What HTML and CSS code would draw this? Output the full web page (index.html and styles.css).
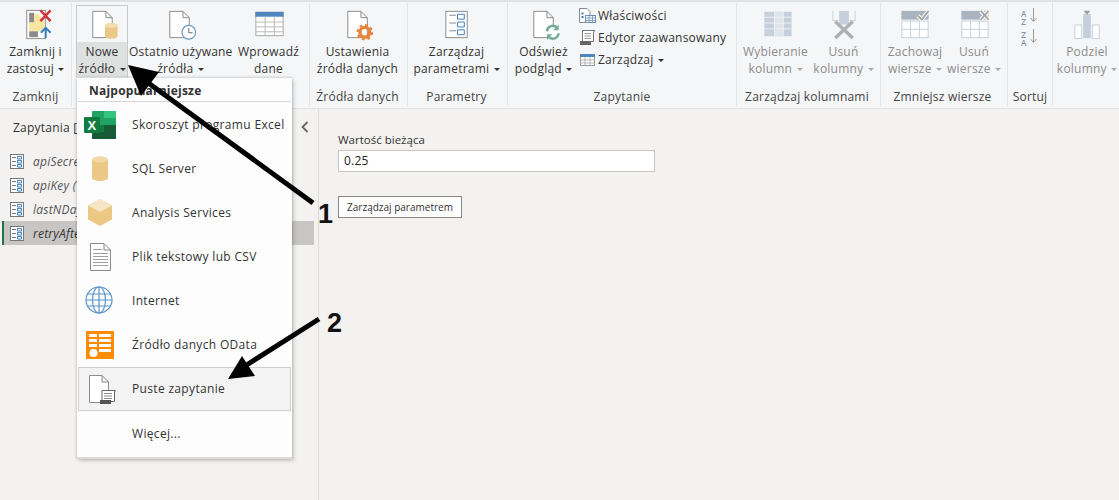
FILE: index.html
```html
<!DOCTYPE html>
<html lang="pl">
<head>
<meta charset="utf-8">
<title>Power Query</title>
<link rel="stylesheet" href="styles.css">
</head>
<body>
<svg class="defs" width="0" height="0">
  <defs>
    <path id="doc" d="M.5.5H14L20.500 7V27.500H.5Z M14 .5V7H20.500" fill="#fff" stroke="#8a8a8a"/>
  </defs>
</svg>
<div class="app">
  <header class="ribbon">
    <section class="group g-close">
      <div class="tools">
        <div class="tool w-full">
          <svg class="ico" viewBox="0 0 44 37"><rect x="12.500" y="4.500" width="19" height="29" fill="#fff" stroke="#8a8a8a"/><path d="M20 8H24L31 15V26H20Z" fill="#f8e6a0"/><rect x="15" y="7" width="5" height="10" fill="#8a8a8a"/><path d="M15 17H20V26H15Z" fill="#f8e6a0"/><rect x="15" y="26" width="9" height="6" fill="#8a8a8a"/><path d="M26.500 4.500L37 15.500M37 4.500L26.500 15.500" stroke="#d13438" stroke-width="2.500"/><path d="M32 33V23M27 27.500L32 22.500L37 27.500" stroke="#2f7fc1" stroke-width="2" fill="none"/></svg>
          <div class="lbl">Zamknij i<br>zastosuj <i class="caret"></i></div>
        </div>
      </div>
      <div class="glabel">Zamknij</div>
    </section>
    <section class="group g-new">
      <div class="tools">
        <div class="tool w-new active">
          <svg class="ico" viewBox="0 0 44 37"><use href="#doc" x="12" y="5"/><path d="M25 20a6.500 2.500 0 0 1 13 0V31a6.500 2.500 0 0 1-13 0Z" fill="#ebc884"/><ellipse cx="31.500" cy="20" rx="6.500" ry="2.500" fill="#f3dcae"/></svg>
          <div class="lbl">Nowe<br>źródło <i class="caret"></i></div>
        </div>
        <div class="tool w-recent">
          <svg class="ico" viewBox="0 0 44 37"><use href="#doc" x="10" y="5"/><circle cx="30" cy="27" r="7" fill="#fff" stroke="#6a9bc9" stroke-width="1.300"/><path d="M30 22.500V27.500H34" fill="none" stroke="#666"/></svg>
          <div class="lbl">Ostatnio używane<br>źródła <i class="caret"></i></div>
        </div>
        <div class="tool w-enter">
          <svg class="ico" viewBox="0 0 44 37"><rect x="8.500" y="6.500" width="28" height="24" fill="#fff" stroke="#a6a6a6"/><rect x="8" y="6" width="29" height="5" fill="#4f86bd"/><path d="M8.500 16.500H36.500M8.500 21.500H36.500M8.500 26.500H36.500M18 11V31M27.500 11V31" stroke="#b8b8b8"/></svg>
          <div class="lbl">Wprowadź<br>dane</div>
        </div>
      </div>
      <div class="glabel">&nbsp;</div>
    </section>
    <section class="group g-src">
      <div class="tools">
        <div class="tool w-full">
          <svg class="ico" viewBox="0 0 44 37"><use href="#doc" x="11" y="5"/><circle cx="29" cy="27" r="5" fill="none" stroke="#e8833a" stroke-width="3.500"/><circle cx="29" cy="27" r="7.500" fill="none" stroke="#e8833a" stroke-width="2" stroke-dasharray="3 2.900"/></svg>
          <div class="lbl">Ustawienia<br>źródła danych</div>
        </div>
      </div>
      <div class="glabel">Źródła danych</div>
    </section>
    <section class="group g-par">
      <div class="tools">
        <div class="tool w-full">
          <svg class="ico" viewBox="0 0 44 37"><rect x="10.500" y="5.500" width="22" height="27" fill="#fff" stroke="#8a8a8a"/><path d="M14 9.500H21M14 17.500H21M14 25.500H21" stroke="#8a8a8a"/><path d="M22.500 8.500H29.500V13.500H22.500ZM22.500 16.500H29.500V21.500H22.500ZM22.500 24.500H29.500V29.500H22.500Z" fill="none" stroke="#3f7fbf"/></svg>
          <div class="lbl">Zarządzaj<br>parametrami <i class="caret"></i></div>
        </div>
      </div>
      <div class="glabel">Parametry</div>
    </section>
    <section class="group g-query">
      <div class="tools">
        <div class="tool w-refresh">
          <svg class="ico" viewBox="0 0 44 37"><use href="#doc" x="11" y="5"/><circle cx="31" cy="27" r="7" fill="#fff"/><path d="M25 26a6 6 0 0 1 10.500-3.500M37 28a6 6 0 0 1-10.500 3.500" fill="none" stroke="#74ab98" stroke-width="2.500"/><path d="M37 19V25H31.500ZM25 35V29H30.500Z" fill="#74ab98"/></svg>
          <div class="lbl">Odśwież<br>podgląd <i class="caret"></i></div>
        </div>
        <div class="smalls">
          <div class="small">
            <svg class="sico" viewBox="0 0 17 17"><path d="M.5 1.500H8L11 4.500V15.500H.5Z" fill="#fff" stroke="#8a8a8a"/><path d="M2.500 6.500H4.500M2.500 10H4.500" stroke="#3f7fbf" stroke-width="2"/><rect x="6.500" y="8.500" width="10" height="7" fill="#fff" stroke="#6b8fb5"/><path d="M6.500 11H16.500M6.500 13.500H16.500M10 8.500V15.500M13.500 8.500V15.500" stroke="#6b8fb5" stroke-width=".8"/></svg>
            <span>Właściwości</span>
          </div>
          <div class="small">
            <svg class="sico" viewBox="0 0 17 17"><path d="M3.500 1.500H16L14.500 3V12.500H3.500Z" fill="#fff" stroke="#777"/><path d="M5.500 4.500H12M5.500 7H12M5.500 9.500H12" stroke="#999"/><path d="M1 12H12V16H1Z" fill="#666"/></svg>
            <span>Edytor zaawansowany</span>
          </div>
          <div class="small">
            <svg class="sico" viewBox="0 0 17 17"><rect x="1.500" y="3.500" width="14" height="11" fill="#fff" stroke="#999"/><rect x="1" y="3" width="15" height="3" fill="#4f86bd"/><path d="M1.500 9H15.500M1.500 12H15.500M6 6V14.500M11 6V14.500" stroke="#aaa" stroke-width=".8"/></svg>
            <span>Zarządzaj <i class="caret"></i></span>
          </div>
        </div>
      </div>
      <div class="glabel">Zapytanie</div>
    </section>
    <section class="group g-cols">
      <div class="tools off">
        <div class="tool w-pick">
          <svg class="ico" viewBox="0 0 44 37"><rect x="10" y="6" width="28" height="25" fill="#c6d0dc"/><rect x="21" y="6" width="8" height="25" fill="#dfe5ec"/><path d="M10 11.500H38M10 17.500H38M10 23.500H38M20.500 6V31M29.500 6V31" stroke="#edf0f3"/></svg>
          <div class="lbl">Wybieranie<br>kolumn <i class="caret"></i></div>
        </div>
        <div class="tool w-delc">
          <svg class="ico" viewBox="0 0 44 37"><path d="M10.500 5V15H16M33.500 5V15H28" fill="none" stroke="#c6d0dc"/><path d="M17 5H27V19H17Z" fill="#c6d0dc"/><path d="M13 16L31 33M31 16L13 33" stroke="#b0b0b0" stroke-width="3.500"/></svg>
          <div class="lbl">Usuń<br>kolumny <i class="caret"></i></div>
        </div>
      </div>
      <div class="glabel">Zarządzaj kolumnami</div>
    </section>
    <section class="group g-rows">
      <div class="tools off">
        <div class="tool w-keep">
          <svg class="ico" viewBox="0 0 44 37"><rect x="8" y="5" width="28" height="9" fill="#aab4c0"/><rect x="8.500" y="15.500" width="27" height="17" fill="#fff" stroke="#c6d0dc"/><path d="M8.500 24H35.500M17.500 15V33M26.500 15V33" stroke="#c6d0dc"/><path d="M25 10L29 14L36 5" fill="none" stroke="#fff" stroke-width="4"/><path d="M25 10L29 14L36 5" fill="none" stroke="#a6a6a6" stroke-width="2"/></svg>
          <div class="lbl">Zachowaj<br>wiersze <i class="caret"></i></div>
        </div>
        <div class="tool w-delr">
          <svg class="ico" viewBox="0 0 44 37"><rect x="9" y="5" width="28" height="9" fill="#aab4c0"/><rect x="9.500" y="15.500" width="27" height="17" fill="#fff" stroke="#c6d0dc"/><path d="M9.500 24H36.500M18.500 15V33M27.500 15V33" stroke="#c6d0dc"/><path d="M29 5L37 14M37 5L29 14" stroke="#fff" stroke-width="4"/><path d="M29 5L37 14M37 5L29 14" stroke="#a6a6a6" stroke-width="2"/></svg>
          <div class="lbl">Usuń<br>wiersze <i class="caret"></i></div>
        </div>
      </div>
      <div class="glabel">Zmniejsz wiersze</div>
    </section>
    <section class="group g-sort">
      <div class="tools off">
        <div class="sort">
          <div class="sortrow"><span class="az">AZ</span><svg width="7" height="15" viewBox="0 0 7 15"><path d="M3.500 0V13M.5 10L3.500 13.500L6.500 10" fill="none" stroke="#9a9a9a"/></svg></div>
          <div class="sortrow"><span class="az">ZA</span><svg width="7" height="15" viewBox="0 0 7 15"><path d="M3.500 0V13M.5 10L3.500 13.500L6.500 10" fill="none" stroke="#9a9a9a"/></svg></div>
        </div>
      </div>
      <div class="glabel">Sortuj</div>
    </section>
    <section class="group g-split">
      <div class="tools off">
        <div class="tool w-full">
          <svg class="ico" viewBox="0 0 44 37"><rect x="9.500" y="19.500" width="7" height="14" fill="#fff" stroke="#c6d0dc"/><rect x="27.500" y="19.500" width="7" height="14" fill="#fff" stroke="#c6d0dc"/><rect x="18" y="8" width="8" height="25" fill="#c6d0dc"/><path d="M18.500 5H25.500L22 9Z" fill="#9a9a9a"/></svg>
          <div class="lbl">Podziel<br>kolumny <i class="caret"></i></div>
        </div>
      </div>
      <div class="glabel">&nbsp;</div>
    </section>
  </header>
  <main class="main">
    <aside class="queries">
      <div class="qhead"><span>Zapytania [4]</span><svg class="chev" width="8" height="12" viewBox="0 0 8 12"><path d="M6.500 1L1.500 6L6.500 11" fill="none" stroke="#666" stroke-width="1.800"/></svg></div>
      <div class="qrow"><svg class="qico" viewBox="0 0 14 15"><use href="#qi"/></svg><span>apiSecret</span></div>
      <div class="qrow"><svg class="qico" viewBox="0 0 14 15"><use href="#qi"/></svg><span>apiKey (</span></div>
      <div class="qrow"><svg class="qico" viewBox="0 0 14 15"><use href="#qi"/></svg><span>lastNDays</span></div>
      <div class="qrow sel"><svg class="qico" viewBox="0 0 14 15"><use href="#qi"/></svg><span>retryAfter</span></div>
      <svg class="defs" width="0" height="0"><defs><g id="qi"><rect x=".5" y=".5" width="13" height="14" fill="#fff" stroke="#777"/><path d="M2 3.500H6M2 7.500H6M2 11.500H6" stroke="#777"/><path d="M7.500 2.500H11.500V5H7.500ZM7.500 6.500H11.500V9H7.500ZM7.500 10.500H11.500V13H7.500Z" fill="none" stroke="#3f7fbf"/></g></defs></svg>
    </aside>
    <div class="content">
      <label class="flabel">Wartość bieżąca</label>
      <div class="input">0.25</div>
      <button class="btn">Zarządzaj parametrem</button>
    </div>
  </main>

  <nav class="menu">
    <div class="mhead">Najpopularniejsze</div>
    <div class="mitem">
      <svg class="mico" viewBox="0 0 40 32"><rect x="10" y="3" width="24" height="28" rx="1" fill="#21a366"/><rect x="22" y="3" width="12" height="7" fill="#33c481"/><rect x="10" y="10" width="12" height="7" fill="#21a366"/><rect x="22" y="10" width="12" height="7" fill="#21a366"/><rect x="10" y="17" width="24" height="7" fill="#107c41"/><rect x="10" y="24" width="24" height="7" fill="#185c37"/><rect x="22" y="17" width="12" height="7" fill="#185c37"/><rect x="2" y="9" width="16" height="16" rx="1" fill="#107c41"/><text class="xl" x="10" y="22">X</text></svg>
      <span>Skoroszyt programu Excel</span>
    </div>
    <div class="mitem">
      <svg class="mico" viewBox="0 0 40 32"><path d="M10 7.500a8 3 0 0 1 16 0V26a8 3 0 0 1-16 0Z" fill="#ebc884"/><ellipse cx="18" cy="7.500" rx="8" ry="3" fill="#f1d8a8"/></svg>
      <span>SQL Server</span>
    </div>
    <div class="mitem">
      <svg class="mico" viewBox="0 0 40 32"><path d="M18 3L30 9.500V23.500L18 30L6 23.500V9.500Z" fill="#ebc884"/><path d="M18 3L30 9.500L18 16L6 9.500Z" fill="#f6e6c6"/></svg>
      <span>Analysis Services</span>
    </div>
    <div class="mitem">
      <svg class="mico" viewBox="0 0 40 32"><path d="M8.500 3.500H22L28.500 10V30.500H8.500Z M22 3.500V10H28.500" fill="#fff" stroke="#8a8a8a"/><path d="M11 9.500H20M11 13.500H26M11 16.500H26M11 19.500H26M11 22.500H26M11 25.500H26" stroke="#a0a0a0"/></svg>
      <span>Plik tekstowy lub CSV</span>
    </div>
    <div class="mitem">
      <svg class="mico" viewBox="0 0 40 32"><g fill="none" stroke="#5b93c9" stroke-width="1.200"><circle cx="17" cy="16" r="13"/><ellipse cx="17" cy="16" rx="6.500" ry="13"/><path d="M17 3V29M5.500 10H28.500M4 16H30M5.500 22H28.500"/></g></svg>
      <span>Internet</span>
    </div>
    <div class="mitem">
      <svg class="mico" viewBox="0 0 40 32"><rect x="4" y="3" width="28" height="28" fill="#ff8c00"/><path d="M7 6H15V9H7ZM17 6H29V9H17ZM7 11H15V14H7ZM17 11H29V14H17ZM7 16H15V19H7ZM17 16H29V19H17ZM17 21H29V24H17Z" fill="#fff"/><circle cx="11.500" cy="25" r="4" fill="#fff"/></svg>
      <span>Źródło danych OData</span>
    </div>
    <div class="mitem hover">
      <svg class="mico" viewBox="0 0 40 32"><path d="M7.500 3.500H20L26.500 10V30.500H7.500Z M20 3.500V10H26.500" fill="#fff" stroke="#8a8a8a"/><path d="M20 18.500H33.500L32.500 20V29.500H20Z" fill="#fff" stroke="#666"/><path d="M22 21.500H30M22 24H30M22 26.500H30" stroke="#888"/><path d="M18 28H29V32.500H18Z" fill="#555"/></svg>
      <span>Puste zapytanie</span>
    </div>
    <div class="mitem">
      <div class="mico"></div>
      <span>Więcej...</span>
    </div>
  </nav>

  <svg class="arrows" width="1119" height="500" viewBox="0 0 1119 500">
    <path d="M313 203L147 82" stroke="#000" stroke-width="5" fill="none"/>
    <path d="M128 65L159 72L141 96Z" fill="#000"/>
    <path d="M319 319L245 366" stroke="#000" stroke-width="5" fill="none"/>
    <path d="M228 379L242 356L255 376Z" fill="#000"/>
  </svg>
  <div class="num n1">1</div>
  <div class="num n2">2</div>
</div>
</body>
</html>
```

FILE: styles.css
```css
* { box-sizing: border-box; }
html, body { margin: 0; padding: 0; }
body {
  width: 1119px;
  height: 500px;
  overflow: hidden;
  background: #f3f2f1;
  color: #333;
  font-family: "Open Sans", "Noto Sans", sans-serif;
  font-size: 12px;
  letter-spacing: .22px;
}
.defs { position: absolute; }
.app {
  position: relative;
  width: 1119px;
  height: 500px;
  display: flex;
  flex-direction: column;
}

/* ribbon */
.ribbon {
  display: flex;
  height: 109px;
  padding-top: 3px;
  background: #f5f6f7;
  border-top: 2px solid #e1e1e1;
  border-bottom: 1px solid #e1e1e1;
  flex: none;
}
.group {
  display: flex;
  flex-direction: column;
  height: 103px;
  margin-top: -2px;
  border-right: 1px solid #e3e5e7;
  flex: none;
}
.g-close { width: 72px; }
.g-new { width: 238px; }
.g-src { width: 98px; padding-right: 2px; }
.g-par { width: 100px; padding-right: 2px; }
.g-query { width: 229px; }
.g-cols { width: 144px; padding-right: 3px; }
.g-rows { width: 127px; padding-right: 3px; }
.g-sort { width: 45px; }
.g-split { width: 66px; border-right: 0; }
.tools {
  display: flex;
  height: 85px;
  padding-top: 2px;
}
.g-new .tools { padding-left: 4px; }
.g-cols .tools { padding-left: 2px; }
.g-rows .tools { padding-left: 3px; }
.g-split .tools { padding-left: 2px; }
.off { color: #8c8c8c; }
.tool {
  display: flex;
  flex-direction: column;
  align-items: center;
  height: 72px;
  border: 1px solid transparent;
  flex: none;
}
.w-full { width: 100%; }
.w-new { width: 52px; }
.w-recent { width: 105px; }
.w-enter { width: 71px; }
.w-refresh { width: 71px; }
.w-pick { width: 73px; }
.w-delc { width: 63px; }
.w-keep { width: 62px; }
.w-delr { width: 56px; }
.active {
  border-color: #c8c8c8;
  background: #f5f6f7;
}
.active .lbl { background: #dfe1e1; }
.ico { width: 44px; height: 36px; display: block; flex: none; }
.lbl {
  width: 100%;
  flex: 1;
  text-align: center;
  line-height: 17px;
  white-space: nowrap;
  padding-top: 1px;
}
.caret {
  display: inline-block;
  width: 0;
  height: 0;
  border-left: 3px solid transparent;
  border-right: 3px solid transparent;
  border-top: 3px solid #333;
  vertical-align: 2px;
  margin-left: 1px;
}
.off .caret { border-top-color: #aaa; }
.glabel {
  text-align: center;
  line-height: 18px;
  color: #444;
  white-space: nowrap;
}
.smalls {
  display: flex;
  flex-direction: column;
  gap: 5px;
  padding-top: 2px;
}
.small {
  display: flex;
  align-items: center;
  gap: 2px;
  height: 17px;
  white-space: nowrap;
}
.sico { width: 17px; height: 17px; flex: none; }
.sort {
  width: 100%;
  display: flex;
  flex-direction: column;
  align-items: center;
  gap: 5px;
  padding: 3px 4px 0 0;
}
.sortrow { display: flex; align-items: flex-start; gap: 2px; height: 16px; }
.az {
  writing-mode: vertical-rl;
  text-orientation: upright;
  font-size: 8px;
  line-height: 9px;
  letter-spacing: -3.5px;
  font-weight: 600;
  color: #7f93ab;
}

/* body */
.main { display: flex; flex: 1; min-height: 0; }
.queries {
  width: 319px;
  flex: none;
  border-right: 1px solid #dcdcdc;
}
.qhead {
  display: flex;
  align-items: center;
  justify-content: space-between;
  height: 40px;
  padding: 0 10px 4px 13px;
}
.chev { margin-right: -1px; }
.qrow {
  display: flex;
  align-items: center;
  gap: 9px;
  width: 312px;
  height: 24px;
  margin-left: 2px;
  padding-left: 6px;
  font-style: italic;
  color: #555;
  border-left: 2px solid transparent;
}
.qrow.sel {
  background: #c8c6c4;
  border-left-color: #217346;
  color: #333;
}
.qico { width: 14px; height: 15px; flex: none; }
.content {
  flex: 1;
  padding: 23px 0 0 19px;
  display: flex;
  flex-direction: column;
  align-items: flex-start;
}
.flabel { line-height: 16px; font-size: 11.5px; letter-spacing: 0; }
.input {
  width: 317px;
  height: 22px;
  margin-top: 2px;
  padding-left: 5px;
  line-height: 20px;
  background: #fff;
  border: 1px solid #c8c6c4;
  color: #222;
}
.btn {
  width: 124px;
  height: 22px;
  margin-top: 24px;
  padding: 0;
  background: #fff;
  border: 1px solid #8a8886;
  color: #333;
  font: 10px "Open Sans", "Noto Sans", sans-serif;
}

/* dropdown menu */
.menu {
  position: absolute;
  left: 77px;
  top: 78px;
  width: 215px;
  height: 381px;
  padding: 0 1px;
  background: #fdfdfd;
  border-bottom: 2px solid #dcdcdc;
  box-shadow: 0 0 3px rgba(0, 0, 0, .3), 3px 3px 3px rgba(0, 0, 0, .08);
}
.mhead {
  height: 24px;
  line-height: 25px;
  padding-left: 11px;
  font-weight: 700;
  border-bottom: 1px solid #d8d8d8;
}
.mitem {
  display: flex;
  align-items: center;
  gap: 10px;
  height: 44px;
  padding-left: 4px;
  white-space: nowrap;
  letter-spacing: .33px;
}
.mitem.hover {
  margin-top: 1px;
  background: #f3f3f3;
  border: 1px solid #d0d0d0;
  padding-left: 3px;
  padding-bottom: 2px;
}
.mico { width: 40px; height: 32px; flex: none; }
.xl {
  font: 700 13px "Liberation Sans", sans-serif;
  fill: #fff;
  text-anchor: middle;
}

/* annotations */
.arrows { position: absolute; left: 0; top: 0; pointer-events: none; }
.num {
  position: absolute;
  font: 700 27px/27px "Liberation Sans", Arial, sans-serif;
  color: #111;
  letter-spacing: 0;
}
.n1 { left: 318px; top: 201px; }
.n2 { left: 327px; top: 310px; }
```
